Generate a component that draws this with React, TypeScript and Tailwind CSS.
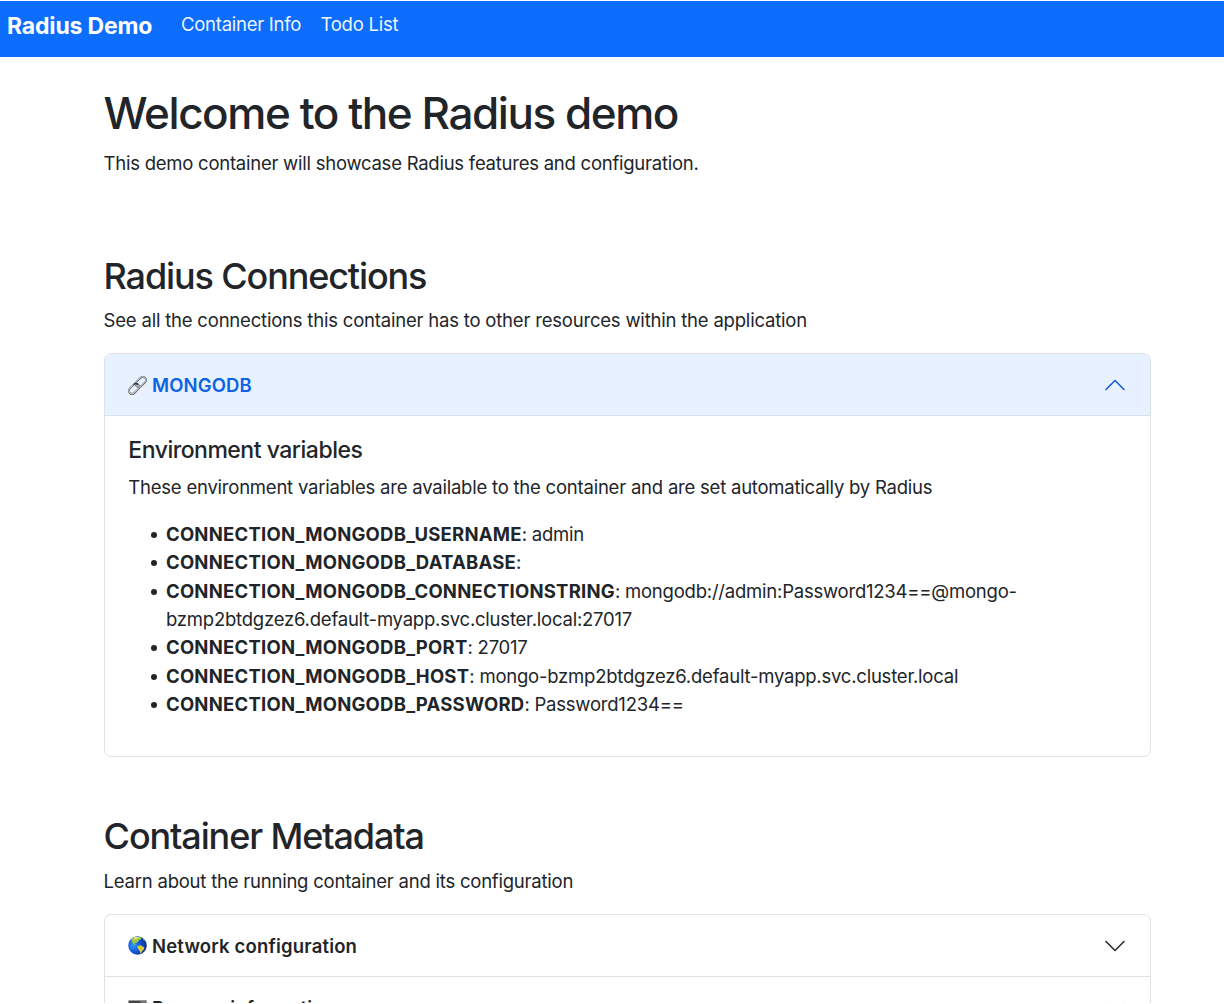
import React from "react";

function LinkIcon() {
  return (
    <svg className="h-[19px] w-[19px] shrink-0" viewBox="0 0 19 19" fill="none">
      <g transform="rotate(-45 9.5 9.5)">
        <rect x="-1.2" y="6.2" width="11.8" height="6.4" rx="3.2" stroke="#6b6763" strokeWidth="1.8" />
        <rect x="-1.2" y="6" width="11.8" height="6.4" rx="3.2" stroke="#dfe3e6" strokeWidth="0.8" />
        <rect x="8.4" y="6.2" width="11.8" height="6.4" rx="3.2" stroke="#5d646b" strokeWidth="1.8" />
        <rect x="8.4" y="6" width="11.8" height="6.4" rx="3.2" stroke="#cfe0ec" strokeWidth="0.8" />
        <path d="M7.4 6.2c2 0 3.2 1.3 3.2 3.2" stroke="#3a3a3a" strokeWidth="1.4" />
      </g>
    </svg>
  );
}

function GlobeIcon() {
  return (
    <svg className="h-[19px] w-[19px] shrink-0" viewBox="0 0 19 19">
      <defs>
        <radialGradient id="ocean" cx="0.28" cy="0.5" r="0.75">
          <stop offset="0" stopColor="#2f9bf8" />
          <stop offset="0.5" stopColor="#1453d8" />
          <stop offset="1" stopColor="#0a2a88" />
        </radialGradient>
        <clipPath id="disc"><circle cx="9.5" cy="9.5" r="9.3" /></clipPath>
      </defs>
      <circle cx="9.5" cy="9.5" r="9.3" fill="url(#ocean)" />
      <g clipPath="url(#disc)">
        <path d="M3.4 3 6 1.2 10 .6l3.6 1-.8 1.8-1.4.6-1.2 1.6-1.2 1.2-1.6.2-.8.8 1.6 1-.8.2-2-1-1.4-2-.8-1.8z" fill="#9cc94c" />
        <path d="M5.5 1.5 9 .8l2 .8-2.6 1.8-2.8.2z" fill="#d9e07a" />
        <path d="m9.6 10 2-.8 2 .6 1.6 1 1.2.8-.6 2-1.4 1.2-1 1.6-1.2 1-.4-2.4-1.2-1.6-1.2-1.6z" fill="#d3ca36" />
        <path d="m14.5 1.4 2 2 .8 2-2-1.6z" fill="#7fb85a" />
      </g>
    </svg>
  );
}

function MonitorIcon() {
  return (
    <svg className="h-[19px] w-[19px] shrink-0" viewBox="0 0 19 19">
      <rect x="0" y="1" width="19" height="13" rx="0.8" fill="#b5b5b5" />
      <rect x="0.8" y="1.8" width="17.4" height="10.6" fill="#444" />
      <path d="M11 1.8h7.2v6z" fill="#777" />
      <path d="M7 14h5l1 4H6z" fill="#999" />
    </svg>
  );
}

function Chevron({ up = false }: { up?: boolean }) {
  return (
    <svg className={up ? "h-6 w-6 rotate-180 text-[#0c56e0]" : "h-6 w-6 text-[#212529]"} viewBox="0 0 16 16" fill="currentColor">
      <path fillRule="evenodd" d="M1.646 4.646a.5.5 0 0 1 .708 0L8 10.293l5.646-5.647a.5.5 0 0 1 .708.708l-6 6a.5.5 0 0 1-.708 0l-6-6a.5.5 0 0 1 0-.708z" />
    </svg>
  );
}

const variables = [
  ["CONNECTION_MONGODB_USERNAME", "admin"],
  ["CONNECTION_MONGODB_DATABASE", ""],
  ["CONNECTION_MONGODB_CONNECTIONSTRING", "mongodb://admin:Password1234==@mongo-bzmp2btdgzez6.default-myapp.svc.cluster.local:27017"],
  ["CONNECTION_MONGODB_PORT", "27017"],
  ["CONNECTION_MONGODB_HOST", "mongo-bzmp2btdgzez6.default-myapp.svc.cluster.local"],
  ["CONNECTION_MONGODB_PASSWORD", "Password1234=="],
];

export default function App() {
  return (
    <div className="h-[1003px] overflow-hidden bg-white font-['Inter',sans-serif] text-[18.5px] leading-[28.4px] tracking-[-0.22px] text-[#212529]">
      <nav className="mt-px flex h-14 items-start bg-[#0d6efd] pl-[7px] text-white">
        <a className="mt-[11px] w-[174px] text-[23px] font-bold tracking-[-0.17px]">Radius Demo</a>
        <a className="mt-[9px] w-[139.5px] tracking-[-0.26px] text-white/95">Container Info</a>
        <a className="mt-[9px] tracking-[-0.25px] text-white/95">Todo List</a>
      </nav>
      <main className="ml-[103.6px] w-[1047.8px]">
        <h1 className="pt-[28px] text-[44px] leading-[56px] font-medium tracking-[-1.43px]">Welcome to the Radius demo</h1>
        <p className="mt-[8px] tracking-[-0.245px]">This demo container will showcase Radius features and configuration.</p>

        <h2 className="mt-[77px] text-[36px] leading-[44px] font-medium tracking-[-1.13px]">Radius Connections</h2>
        <p className="mt-[8px] tracking-[-0.2px]">See all the connections this container has to other resources within the application</p>
        <section className="mt-[18px] h-[404px] overflow-hidden rounded-[7px] border border-[#dee2e6]">
          <div className="flex h-[62px] items-center border-b border-[#d9e1ea] bg-[#e7f1ff] pt-[2px] pr-[23.4px] pl-[23.4px]">
            <LinkIcon />
            <span className="ml-[5px] grow font-semibold tracking-[0.12px] text-[#0c63e4]">MONGODB</span>
            <Chevron up />
          </div>
          <div className="pt-[20px] pl-[23.7px]">
            <h3 className="text-[23px] leading-[28px] font-medium tracking-[-0.49px]">Environment variables</h3>
            <p className="mt-[9px]">These environment variables are available to the container and are set automatically by Radius</p>
            <ul className="mt-[18.8px] pl-[37.7px] leading-[28.3px]">
              {variables.map(([name, value]) => (
                <li
                  key={name}
                  className="relative max-w-[900px] before:absolute before:top-[12px] before:left-[-15.3px] before:h-1.5 before:w-1.5 before:rounded-full before:bg-[#212529] before:content-['']"
                >
                  <b className="font-bold tracking-[0.23px]">{name}</b>: {value}
                </li>
              ))}
            </ul>
          </div>
        </section>

        <h2 className="mt-[57px] text-[36px] leading-[44px] font-medium tracking-[-1.12px]">Container Metadata</h2>
        <p className="mt-[9px]">Learn about the running container and its configuration</p>
        <section className="mt-[19px] rounded-t-[7px] border border-[#dee2e6]">
          <div className="flex h-[62px] items-center border-b border-[#dee2e6] pr-[23.4px] pl-[23.4px]">
            <GlobeIcon />
            <span className="ml-[5px] grow font-semibold tracking-[0.18px]">Network configuration</span>
            <Chevron />
          </div>
          <div className="flex h-[62px] items-center pr-[23.4px] pl-[23.4px]">
            <MonitorIcon />
            <span className="ml-[5px] grow font-semibold tracking-[0.18px]">Process information</span>
            <Chevron />
          </div>
        </section>
      </main>
    </div>
  );
}
